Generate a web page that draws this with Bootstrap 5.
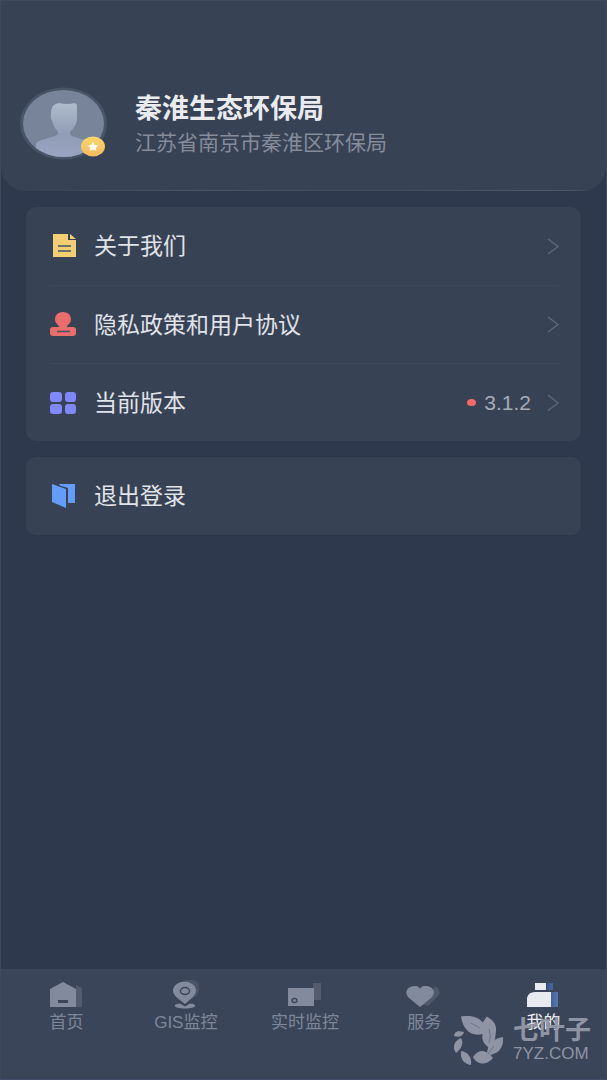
<!DOCTYPE html>
<html lang="zh-CN">
<head>
<meta charset="utf-8">
<meta name="viewport" content="width=device-width, initial-scale=1">
<title>我的</title>
<link href="https://cdn.jsdelivr.net/npm/bootstrap@5.3.0/dist/css/bootstrap.min.css" rel="stylesheet">
<style>
body{font-family:"Liberation Sans","Noto Sans CJK SC",sans-serif;background:#2f394d;color:#e6e8ec}
.app{border:1px solid #3f495d;border-bottom-color:#454b69}
.profile{background:#384255;border-radius:0 0 24px 24px;padding:86px 19px 31px}
.profile::after{content:"";position:absolute;left:24px;right:12px;bottom:0;height:1px;background:linear-gradient(90deg,#4a556800,#4a5568 30%,#414b5e 60%,#4f596c 95%,#4a556800)}
.avatar{width:88px;height:73px}
.who{padding-left:27px}
.who h1{font-size:27px;line-height:34px;font-weight:700;color:#e9ebef}
.who p{font-size:21px;line-height:34px;color:#858c9a}
.who h1,.who p{font-family:"Noto Sans CJK SC",sans-serif}
.who p{font-weight:400}
.content{padding:16px 25px}
.panel{background:#384255;border-radius:10px;padding:0 22px 0 24px}
.line-item{height:78px;color:#e0e3e8;font-size:23px;line-height:32px;text-align:left}
.line-item+.line-item{border-top:1px solid #3e485c!important}
.line-item .glyph{width:28px;height:28px;margin-right:16px}
.version{font-size:21px;color:#a5abb7}
.dot{width:9px;height:7px;background:#f56a68}
.tabs{background:#3b4559;height:110px;padding:11px 3px 0 6px}
.tabs a{font-size:17px;line-height:26px;color:#7e8799;flex:1 1 0}
.tabs a.active{color:#eef0f4}
.tabs svg{width:36px;height:30px}
.mark-logo{right:15px;bottom:12px;color:#959ba9;opacity:.93;pointer-events:none}
.mark-name{font-size:26px;line-height:28px;font-weight:700}
.mark-site{font-size:17px;line-height:20px;font-weight:400}
</style>
</head>
<body>
<div class="app d-flex flex-column min-vh-100 position-relative">
<header class="profile position-relative d-flex align-items-center">
  <svg class="avatar flex-shrink-0" viewBox="0 0 88 73" role="img" aria-label="头像">
    <defs>
      <linearGradient id="head" x2="0" y2="1"><stop stop-color="#afbbcc"/><stop offset="1" stop-color="#929db6"/></linearGradient>
      <linearGradient id="torso" x2="0" y2="1"><stop stop-color="#8f9ab3"/><stop offset="1" stop-color="#9ba6c4"/></linearGradient>
      <linearGradient id="gold" x2="0" y2="1"><stop stop-color="#ffd769"/><stop offset="1" stop-color="#f2b95f"/></linearGradient>
      <linearGradient id="blue"><stop stop-color="#385887"/><stop offset="1" stop-color="#5478af"/></linearGradient>
      <clipPath id="face"><ellipse cx="43.500" cy="36.500" rx="40.500" ry="33.500"/></clipPath>
    </defs>
    <ellipse cx="43.500" cy="36.500" rx="43.500" ry="36" fill="#485467"/>
    <ellipse cx="43.500" cy="36.500" rx="40.500" ry="33.500" fill="#78849a"/>
    <g clip-path="url(#face)"><path d="M38 43v4c-3 4-21 5-22 10v16h56V57c-3-5-21-6-22-10v-4z" fill="url(#torso)"/>
    <path d="M31 25q0-8 8-9 8 2 16 0l2 2v15c-1 6-6 14-13 14S33 39 32 33c-2-2-1-5-1-8z" fill="url(#head)"/></g>
    <ellipse cx="73" cy="59.500" rx="12" ry="10" fill="url(#gold)"/>
    <path d="m73 54.800 1.700 3.100 4 .500-2.900 2.300.700 3.400-3.500-1.600-3.500 1.600.700-3.400-2.900-2.300 4-.500z" fill="#fff"/>
  </svg>
  <div class="who"><h1 class="mb-0">秦淮生态环保局</h1><p class="mb-0">江苏省南京市秦淮区环保局</p></div>
</header>
<main class="content flex-grow-1 d-flex flex-column gap-3">
  <nav class="panel" aria-label="设置">
    <a href="#about" class="line-item d-flex align-items-center text-decoration-none">
      <svg class="glyph" viewBox="0 0 28 28" fill="#f2cf75"><path d="M3 2h15v6h8v17H3zM20 2l6 5h-6z"/><path d="M8 14h13M8 19h13" stroke="#455064" stroke-width="1.500"/></svg>
      <span>关于我们</span>
      <svg class="ms-auto" width="12" height="18" viewBox="0 0 12 18" fill="none" stroke="#606a7b" stroke-width="1.300"><path d="m1 2 10 7.500L1 17"/></svg>
    </a>
    <a href="#privacy" class="line-item d-flex align-items-center text-decoration-none">
      <svg class="glyph" viewBox="0 0 28 28" fill="#e96d6b"><path d="M9 17c1-3-4-4-4-8.500C5 4 8 1 13 1s8 3 8 7.500c0 4.500-5 5.500-4 8.500z"/><rect y="16" width="26" height="9" rx="3"/><path d="M7 20.500h13" stroke="#485063" stroke-width="1.500"/></svg>
      <span>隐私政策和用户协议</span>
      <svg class="ms-auto" width="12" height="18" viewBox="0 0 12 18" fill="none" stroke="#606a7b" stroke-width="1.300"><path d="m1 1 10 7.500L1 16"/></svg>
    </a>
    <a href="#version" class="line-item d-flex align-items-center text-decoration-none">
      <svg class="glyph" viewBox="0 0 28 28" fill="#7f87fb"><rect y="3" width="12" height="10" rx="3"/><rect x="15" y="3" width="11" height="10" rx="3"/><rect y="15" width="12" height="10" rx="3"/><rect x="15" y="15" width="11" height="10" rx="3"/></svg>
      <span>当前版本</span>
      <span class="dot rounded-circle ms-auto"></span><span class="version ms-2 me-3">3.1.2</span>
      <svg width="12" height="18" viewBox="0 0 12 18" fill="none" stroke="#606a7b" stroke-width="1.300"><path d="m1 1 10 8L1 16.500"/></svg>
    </a>
  </nav>
  <div class="panel">
    <button type="button" class="line-item d-flex align-items-center w-100 border-0 bg-transparent p-0">
      <svg class="glyph" viewBox="0 0 28 28" fill="#659bfa"><path d="M9 2h16v19h-7z"/><path d="m1 1 17 5v21L1 21z" fill="#384255"/><path d="m2 2 14 5v19L2 20z"/></svg>
      <span>退出登录</span>
    </button>
  </div>
</main>
<nav class="tabs d-flex align-items-start" aria-label="主导航">
  <a href="#home" class="d-flex flex-column align-items-center text-decoration-none">
    <svg viewBox="0 0 36 30"><path d="M27 5l6 3v19h-6z" fill="#535c6f"/><path d="m14 2 13 7v18H1V9z" fill="#828b9d"/><path d="M9 21.500h10" stroke="#3b4559" stroke-width="3"/></svg><span>首页</span></a>
  <a href="#gis" class="d-flex flex-column align-items-center text-decoration-none">
    <svg viewBox="0 0 36 30"><path d="M24 0c6 0 10 8 5 15L17 24V0z" fill="#4b5468"/><path d="M17 24C11 19 5 16 5 10.500a11.500 9 0 0 1 23 0C28 16 22 19 17 24z" fill="#828b9d"/><ellipse cx="17" cy="11" rx="4.500" ry="3.500" fill="none" stroke="#3b4559" stroke-width="1.500"/><path d="M12 23.500C4 24 5 28.500 17 28.500s13-4.500 5-5l-5 3z" fill="#828b9d"/></svg><span>GIS监控</span></a>
  <a href="#live" class="d-flex flex-column align-items-center text-decoration-none">
    <svg viewBox="0 0 36 30"><path d="M26 3h8v17h-8z" fill="#535b6d"/><path d="M1 8h26v18H1z" fill="#828b9d"/><ellipse cx="7.500" cy="20.500" rx="2.500" ry="2" fill="none" stroke="#3b4559" stroke-width="1.300"/></svg><span>实时监控</span></a>
  <a href="#service" class="d-flex flex-column align-items-center text-decoration-none">
    <svg viewBox="0 0 36 30"><path d="M29 6c7 4 5 9 1 12l-8 8-7-2z" fill="#50596c"/><path d="M14 27 3 18C-4 11 4 5 10 6c2 0 4 2 4 3 0-1 2-3 4-3 7-1 14 5 7 12z" fill="#828b9d"/></svg><span>服务</span></a>
  <a href="#me" class="active d-flex flex-column align-items-center text-decoration-none" aria-current="page">
    <svg viewBox="0 0 36 30"><path d="M22 3h6v7h-6zM26 12h7v15h-7z" fill="url(#blue)"/><path d="M10 3h11v7H10zM2 27V18q1-6 8-6h16v15z" fill="#e8eaf0"/></svg><span>我的</span></a>
</nav>
<div class="mark-logo position-absolute d-flex align-items-center gap-2">
  <svg width="52" height="54" viewBox="0 0 52 54" fill="currentColor" aria-hidden="true">
    <path d="M8 3.500C18 2 26 4 30 10v11C18 24 10 17 8 3.500z"/>
    <path d="M34 3.500C40 7 44 12 43 18l-1 8-5 10C30 30 28 26 30 20c-2-7-1-11 4-16.500z"/>
    <path d="M50 24c1 10-4 18-16 18 0-5 1-9 4-12 3-3 6-5 12-6z"/>
    <path d="M20 44c6-8 13-8 20 1-7 8-16 7-20-1z"/>
    <path d="M8 38c7 1 11 6 10 14C11 51 7 46 8 38z"/>
    <path d="M8 25c3 5 1 10-5 15-4-6-2-12 5-15z"/>
    <path d="M1 23c0-4 4-6 10-4-1 4-5 6-10 4z"/>
    <path d="m18 10 9 5M36 16q3 6 0 14M35 41l6-8" fill="none" stroke="#6f7788"/>
  </svg>
  <div><div class="mark-name">七叶子</div><div class="mark-site">7YZ.COM</div></div>
</div>
</div>
<script src="https://cdn.jsdelivr.net/npm/bootstrap@5.3.0/dist/js/bootstrap.bundle.min.js"></script>
</body>
</html>
